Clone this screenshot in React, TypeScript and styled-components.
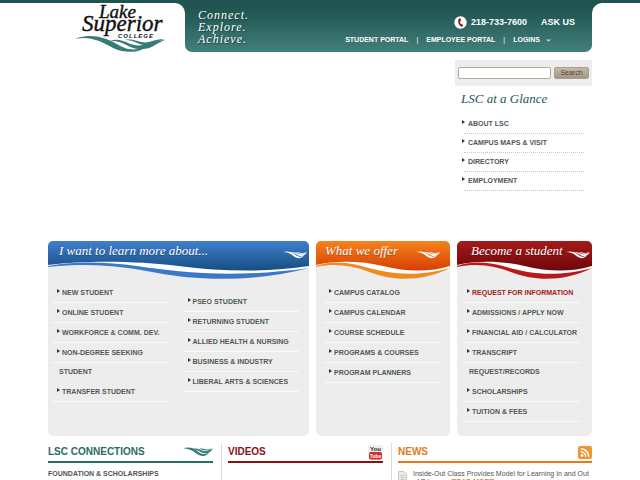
import React from "react";
import styled, { createGlobalStyle } from "styled-components";

const sans = '"Liberation Sans", Arial, sans-serif';
const serif = '"Liberation Serif", "Times New Roman", serif';

const GlobalStyle = createGlobalStyle`
  * { box-sizing: border-box; }
  html { scrollbar-width: none; }
  body {
    margin: 0;
    background: #fff;
    color: #4f5752;
    font: 7px/10px ${sans};
  }
  a { color: inherit; text-decoration: none; }
  ul, h1, h2, p { margin: 0; padding: 0; }
  ul { list-style: none; }
`;

const Header = styled.header`
  display: grid;
  grid-template-columns: calc(7.5% + 137px) 1fr 7.5%;
  background: linear-gradient(#1f5250 0, #235855 20px, #fff 20px);
`;

const HeaderSide = styled.div<{ $side: "left" | "right" }>`
  margin-top: 3px;
  background: #fff;
  border-radius: ${(p) => (p.$side === "left" ? "0 10px 0 0" : "10px 0 0 0")};
`;

const LogoLink = styled.a`
  display: block;
  width: 92px;
  margin-left: auto;
  margin-right: 18px;
  svg { display: block; overflow: visible; }
`;

const Banner = styled.div`
  display: flex;
  justify-content: space-between;
  min-height: 52px;
  padding: 9px 17px 5px 13px;
  color: #fff;
  border-radius: 0 0 7px 7px;
  background: linear-gradient(#1f5250 0, #235855 14px, #43807b 100%);
`;

const Motto = styled.p`
  font: italic 12px/12px ${serif};
  letter-spacing: 1px;
  text-shadow: 1px 1px 1px #173f3d;
`;

const HeaderLinks = styled.div`
  display: flex;
  flex-direction: column;
  gap: 7px;
`;

const Contact = styled.div`
  display: flex;
  align-items: center;
  justify-content: flex-end;
  gap: 4px;
  height: 12px;
  margin-top: 7px;
  font-size: 9px;
  font-weight: bold;
  a + a { margin-left: 10px; }
`;

const PortalNav = styled.nav`
  display: flex;
  align-items: center;
  gap: 8px;
  margin-right: 24px;
  font-weight: bold;
  > span { font-weight: normal; }
`;

const LoginLink = styled.a`
  display: flex;
  align-items: center;
  gap: 6px;
`;

const Content = styled.main`
  width: 85%;
  margin: 0 auto;
`;

const Hero = styled.section`
  display: flex;
  justify-content: flex-end;
  min-height: 181px;
  margin-top: 8px;
`;

const Sidebar = styled.aside`
  width: 137px;
`;

const SearchForm = styled.form`
  display: flex;
  align-items: center;
  gap: 3px;
  height: 26px;
  padding: 0 3px;
  background: #ededed;
`;

const SearchInput = styled.input`
  flex: 1;
  min-width: 0;
  height: 12px;
  padding: 0 3px;
  border: 1px solid #b3a997;
  border-radius: 2px;
  background: #fff;
  font: 7px ${sans};
`;

const SearchButton = styled.button`
  width: 35px;
  height: 12px;
  padding: 0;
  border: 1px solid #a99d8c;
  border-radius: 2px;
  background: linear-gradient(#c5baab, #a39583);
  color: #4a443c;
  font: 7px/8px ${sans};
`;

const GlanceTitle = styled.h2`
  margin: 5px 0 8px 6px;
  color: #265a57;
  font: italic 13px/16px ${serif};
`;

const GlanceList = styled.ul`
  margin: 0 8px 0 9px;
`;

const GlanceItem = styled.li`
  display: flex;
  align-items: center;
  height: 19px;
  border-bottom: 1px dotted #c8c8c8;
  font-weight: bold;
  a {
    margin-left: -2px;
  }
  a::before {
    content: "";
    display: inline-block;
    margin-right: 3px;
    border: solid transparent;
    border-width: 2px 0 2px 3px;
    border-left-color: #333;
    vertical-align: 2px;
  }
`;

const Cards = styled.div`
  display: grid;
  grid-template-columns: 261fr 134fr 135fr;
  gap: 7px;
`;

const Card = styled.section`
  min-height: 195px;
  border-radius: 5px;
  overflow: hidden;
  background: #ededed;
`;

const CardHeader = styled.header`
  display: grid;
  height: 42px;
  > * { grid-area: 1 / 1; }
`;

const Wave = styled.svg`
  display: block;
  width: 100%;
  height: 38px;
`;

const CardTitle = styled.div<{ $indent: number; $end: number }>`
  display: flex;
  justify-content: space-between;
  align-items: flex-start;
  padding: 2px ${(p) => p.$end}px 0 ${(p) => p.$indent}px;
  h2 {
    color: #fff;
    font: italic 13px/16px ${serif};
    text-shadow: 0 1px 1px rgba(0, 0, 0, 0.3);
    white-space: nowrap;
  }
  svg { margin-top: 8px; }
`;

const CardLists = styled.div<{ $inset: number }>`
  display: flex;
  gap: 15px;
  padding: 0 10px 0 ${(p) => p.$inset}px;
`;

const LinkList = styled.ul<{ $drop?: boolean }>`
  flex: 0 1 116px;
  margin-top: ${(p) => (p.$drop ? 9 : 0)}px;
`;

const LinkItem = styled.li<{ $accent?: boolean }>`
  padding: 0 0 1px 6px;
  background: linear-gradient(#fafafa, #fafafa) 0 19px / 100% 1px no-repeat;
  color: ${(p) => (p.$accent ? "#a01c18" : "#4f5a4f")};
  font-weight: bold;
  line-height: 19px;
  text-indent: -2px;
  a::before {
    content: "";
    display: inline-block;
    margin-right: 2px;
    border: solid transparent;
    border-width: 2px 0 2px 3px;
    border-left-color: #333;
    vertical-align: 2px;
  }
`;

const BottomRow = styled.div`
  display: grid;
  grid-template-columns: 173fr 170fr 201fr;
  margin-top: 7px;
`;

const Panel = styled.section`
  padding: 0 8px 0 6px;
  border-left: 1px solid #dcdcdc;
  &:first-child { padding-left: 0; border-left: 0; }
  &:last-child { padding-right: 0; }
`;

const PanelHeader = styled.header<{ $color: string }>`
  display: flex;
  justify-content: space-between;
  align-items: center;
  height: 20px;
  border-bottom: 2px solid ${(p) => p.$color};
  color: ${(p) => p.$color};
  h2 { font: bold 10px/12px ${sans}; }
`;

const PanelLink = styled.a`
  display: block;
  margin-top: 6px;
  font-weight: bold;
`;

const NewsItem = styled.article`
  display: flex;
  align-items: flex-start;
  gap: 6px;
  margin-top: 7px;
  line-height: 8px;
  svg { flex: none; margin-top: 1px; }
  a { margin-left: 3px; color: #e0882b; font-weight: bold; }
`;

const Swoosh = ({ color, width }: { color: string; width: number }) => (
  <svg width={width} height={(width * 8) / 24} viewBox="0 0 24 8" fill={color} aria-hidden="true">
    <path d="M0 1C5-.4 9 1 12 3.500C15 6 18 6.500 21 4C19 8 14 8 10.500 5C7.500 2.400 4 1.200 0 1Z" />
    <path d="M8 1.500C13 .5 14 3.500 18 3.300C20 3.200 22 2 24 1C22 4.500 19.500 5.400 17 5C14 4.600 12.500 2 8 1.500Z" />
    <path d="M13 1.400C16.500 .8 18 2.400 20 2L22.500 1C20.500 3.400 17 3.200 13 1.400Z" />
  </svg>
);

const Logo = () => (
  <svg width="92" height="49" viewBox="0 0 92 49" role="img" aria-label="Lake Superior College">
    <g fill="#111" stroke="#111" strokeWidth="0.4" fontFamily={serif} fontStyle="italic">
      <text x="24" y="15" fontSize="19">Lake</text>
      <text x="7" y="28" fontSize="23">Superior</text>
    </g>
    <text x="43" y="35" fill="#111" fontFamily={sans} fontStyle="italic" fontWeight="bold" fontSize="6" letterSpacing="1">
      COLLEGE
    </text>
    <g fill="#357b76">
      <path d="M0 36C14 30 29 34 40 40C50 46 59 50 73 42C66 50 51 51 38 45C25 38 15 33 0 36Z" />
      <path d="M35 38C49 33 53 45 69 42C76 41 81 37 90 37C80 41 77 46 67 46C53 47 50 37 35 38Z" />
      <path d="M50 37C60 35 65 41 74 39C80 37 84 36 90 36C82 38 79 42 73 42C63 43 61 37 50 37Z" />
    </g>
  </svg>
);

const PhoneIcon = () => (
  <svg width="13" height="13" viewBox="0 0 13 13" aria-hidden="true">
    <circle cx="6.500" cy="6.500" r="6.200" fill="#fff" />
    <path d="M6.500 2.300L4.800 2.800C3.300 5.500 4.700 9.300 7.500 10.700L9.300 9.900L8.200 7.900L7.100 8.300C6.200 7.300 5.900 6 6.200 4.900L7.200 4.500Z" fill="#8d1719" />
  </svg>
);

const YouTubeIcon = () => (
  <svg width="15" height="15" viewBox="0 0 15 15" role="img" aria-label="YouTube">
    <rect width="15" height="15" rx="2" fill="#eee" />
    <rect x="1" y="7" width="13" height="7.500" rx="2" fill="#d32a2d" />
    <text x="7.500" y="6" textAnchor="middle" fontFamily={sans} fontWeight="bold" fontSize="6" fill="#222">You</text>
    <text x="7.500" y="13" textAnchor="middle" fontFamily={sans} fontWeight="bold" fontSize="5" fill="#fff">Tube</text>
  </svg>
);

const FeedIcon = () => (
  <svg width="14" height="13" viewBox="0 0 14 13" role="img" aria-label="News feed">
    <rect width="14" height="13" rx="2" fill="#ee9634" />
    <circle cx="4" cy="9.500" r="1.300" fill="#fff" />
    <path d="M2.800 5.800A5 5 0 0 1 7.800 10.800M2.800 2.800A8 8 0 0 1 10.800 10.800" fill="none" stroke="#fff" strokeWidth="1.500" />
  </svg>
);

const PageIcon = () => (
  <svg width="9" height="11" viewBox="0 0 9 11" aria-hidden="true">
    <path d="M.5.5H6L8.500 3V10.500H.5Z" fill="#eeeae4" stroke="#c9c5be" />
    <path d="M2.500 4.500H6.500M2.500 6.500H6.500M2.500 8.500H6.500" stroke="#c9c5be" />
  </svg>
);

type Entry = { label: string; accent?: boolean };
type CardData = {
  id: string;
  title: string;
  indent: number;
  end: number;
  inset: number;
  top: string;
  bottom: string;
  stripe: string;
  lists: Entry[][];
};

const cards: CardData[] = [
  {
    id: "learn",
    title: "I want to learn more about...",
    indent: 11,
    end: 2,
    inset: 5,
    top: "#417fcd",
    bottom: "#164d82",
    stripe: "#3b78c9",
    lists: [
      [
        { label: "NEW STUDENT" },
        { label: "ONLINE STUDENT" },
        { label: "WORKFORCE & COMM. DEV." },
        { label: "NON-DEGREE SEEKING STUDENT" },
        { label: "TRANSFER STUDENT" },
      ],
      [
        { label: "PSEO STUDENT" },
        { label: "RETURNING STUDENT" },
        { label: "ALLIED HEALTH & NURSING" },
        { label: "BUSINESS & INDUSTRY" },
        { label: "LIBERAL ARTS & SCIENCES" },
      ],
    ],
  },
  {
    id: "offer",
    title: "What we offer",
    indent: 9,
    end: 10,
    inset: 9,
    top: "#f5831f",
    bottom: "#d63f02",
    stripe: "#f28a22",
    lists: [
      [
        { label: "CAMPUS CATALOG" },
        { label: "CAMPUS CALENDAR" },
        { label: "COURSE SCHEDULE" },
        { label: "PROGRAMS & COURSES" },
        { label: "PROGRAM PLANNERS" },
      ],
    ],
  },
  {
    id: "become",
    title: "Become a student",
    indent: 14,
    end: 2,
    inset: 6,
    top: "#a51b1b",
    bottom: "#6f0609",
    stripe: "#b9191c",
    lists: [
      [
        { label: "REQUEST FOR INFORMATION", accent: true },
        { label: "ADMISSIONS / APPLY NOW" },
        { label: "FINANCIAL AID / CALCULATOR" },
        { label: "TRANSCRIPT REQUEST/RECORDS" },
        { label: "SCHOLARSHIPS" },
        { label: "TUITION & FEES" },
      ],
    ],
  },
];

const glance = ["ABOUT LSC", "CAMPUS MAPS & VISIT", "DIRECTORY", "EMPLOYMENT"];

const CardWave = ({ card }: { card: CardData }) => (
  <Wave viewBox="0 0 100 38" preserveAspectRatio="none" aria-hidden="true">
    <defs>
      <linearGradient id={card.id} x1="0" y1="0" x2="0" y2="1">
        <stop offset="0" stopColor={card.top} />
        <stop offset="1" stopColor={card.bottom} />
      </linearGradient>
    </defs>
    <path d="M0 20H100V27C70 38 50 31 34 25C22 21 12 21 0 25Z" fill="#fff" />
    <path d="M0 25C12 20 22 21 34 25C50 31 70 38 100 27C78 42 56 39 42 32C30 26 18 21 0 26Z" fill={card.stripe} />
    <path d="M0 0H100V25C85 31 68 31 50 25C35 20 15 19 0 24Z" fill={`url(#${card.id})`} />
  </Wave>
);

export default function App() {
  return (
    <>
      <GlobalStyle />
      <Header>
        <HeaderSide $side="left">
          <LogoLink href="#">
            <Logo />
          </LogoLink>
        </HeaderSide>
        <Banner>
          <Motto>
            Connect.
            <br />
            Explore.
            <br />
            Achieve.
          </Motto>
          <HeaderLinks>
            <Contact>
              <PhoneIcon />
              <a href="tel:2187337600">218-733-7600</a>
              <a href="#ask">ASK US</a>
            </Contact>
            <PortalNav>
              <a href="#student">STUDENT PORTAL</a>
              <span>|</span>
              <a href="#employee">EMPLOYEE PORTAL</a>
              <span>|</span>
              <LoginLink href="#logins">
                LOGINS
                <svg width="5" height="3" viewBox="0 0 5 3" aria-hidden="true">
                  <path d="M0 .5H5L2.500 2.800Z" fill="#b9d2d0" />
                </svg>
              </LoginLink>
            </PortalNav>
          </HeaderLinks>
        </Banner>
        <HeaderSide $side="right" />
      </Header>
      <Content>
        <Hero>
          <Sidebar>
            <SearchForm>
              <SearchInput type="text" aria-label="Search the site" />
              <SearchButton type="button">Search</SearchButton>
            </SearchForm>
            <GlanceTitle>LSC at a Glance</GlanceTitle>
            <GlanceList>
              {glance.map((label) => (
                <GlanceItem key={label}>
                  <a href="#glance">{label}</a>
                </GlanceItem>
              ))}
            </GlanceList>
          </Sidebar>
        </Hero>
        <Cards>
          {cards.map((card) => (
            <Card key={card.id}>
              <CardHeader>
                <CardWave card={card} />
                <CardTitle $indent={card.indent} $end={card.end}>
                  <h2>{card.title}</h2>
                  <Swoosh color="#fff" width={24} />
                </CardTitle>
              </CardHeader>
              <CardLists $inset={card.inset}>
                {card.lists.map((list, i) => (
                  <LinkList key={i} $drop={i > 0}>
                    {list.map((entry) => (
                      <LinkItem key={entry.label} $accent={entry.accent}>
                        <a href="#page">{entry.label}</a>
                      </LinkItem>
                    ))}
                  </LinkList>
                ))}
              </CardLists>
            </Card>
          ))}
        </Cards>
        <BottomRow>
          <Panel>
            <PanelHeader $color="#2a6b62">
              <h2>LSC CONNECTIONS</h2>
              <Swoosh color="#357b76" width={30} />
            </PanelHeader>
            <PanelLink href="#foundation">FOUNDATION &amp; SCHOLARSHIPS</PanelLink>
          </Panel>
          <Panel>
            <PanelHeader $color="#8a1014">
              <h2>VIDEOS</h2>
              <YouTubeIcon />
            </PanelHeader>
          </Panel>
          <Panel>
            <PanelHeader $color="#e57a1c">
              <h2>NEWS</h2>
              <FeedIcon />
            </PanelHeader>
            <NewsItem>
              <PageIcon />
              <p>
                Inside-Out Class Provides Model for Learning In and Out of Prison... <a href="#news">READ MORE</a>
              </p>
            </NewsItem>
          </Panel>
        </BottomRow>
      </Content>
    </>
  );
}
